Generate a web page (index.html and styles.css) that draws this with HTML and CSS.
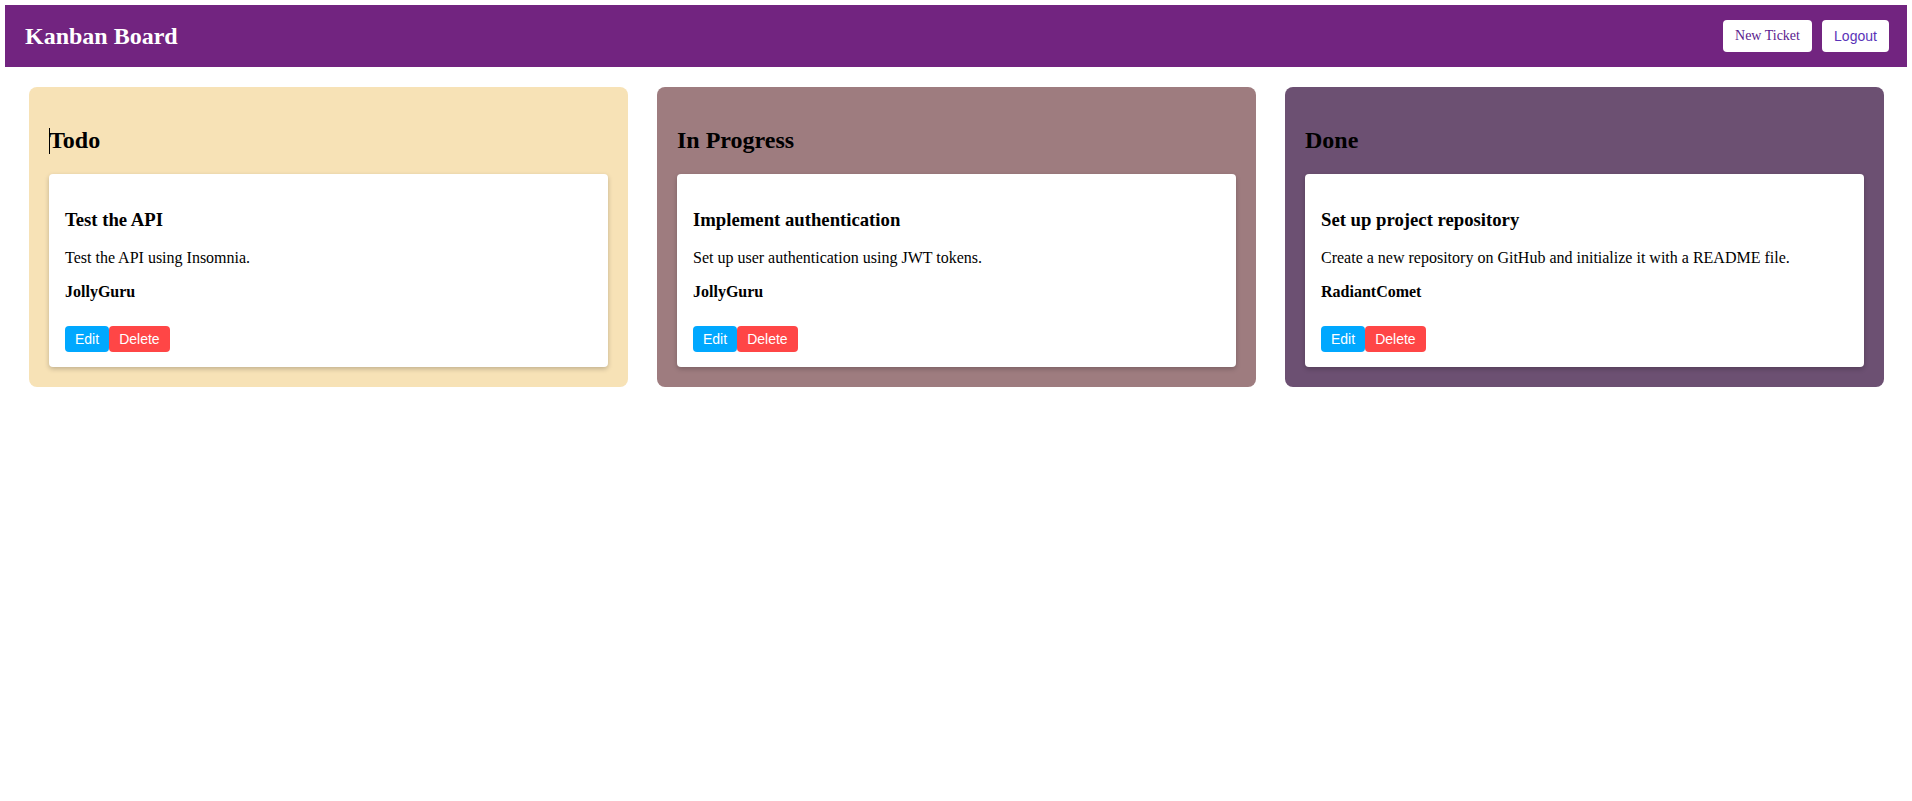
FILE: index.html
```html
<!DOCTYPE html>
<html lang="en">
<head>
<meta charset="utf-8">
<title>Kanban Board</title>
<link rel="stylesheet" href="styles.css">
</head>
<body>
<div class="app">
  <header class="nav">
    <h1 class="brand">Kanban Board</h1>
    <div class="nav-actions">
      <button class="nav-btn nav-link">New Ticket</button>
      <button class="nav-btn nav-logout">Logout</button>
    </div>
  </header>
  <main class="board">
    <section class="column todo">
      <h2 class="column-title"><span class="caret"></span>Todo</h2>
      <div class="ticket">
        <h3 class="ticket-title">Test the API</h3>
        <p class="ticket-desc">Test the API using Insomnia.</p>
        <p class="ticket-user">JollyGuru</p>
        <div class="ticket-actions">
          <button class="btn btn-edit">Edit</button><button class="btn btn-delete">Delete</button>
        </div>
      </div>
    </section>
    <section class="column progress">
      <h2 class="column-title">In Progress</h2>
      <div class="ticket">
        <h3 class="ticket-title">Implement authentication</h3>
        <p class="ticket-desc">Set up user authentication using JWT tokens.</p>
        <p class="ticket-user">JollyGuru</p>
        <div class="ticket-actions">
          <button class="btn btn-edit">Edit</button><button class="btn btn-delete">Delete</button>
        </div>
      </div>
    </section>
    <section class="column done">
      <h2 class="column-title">Done</h2>
      <div class="ticket">
        <h3 class="ticket-title">Set up project repository</h3>
        <p class="ticket-desc">Create a new repository on GitHub and initialize it with a README file.</p>
        <p class="ticket-user">RadiantComet</p>
        <div class="ticket-actions">
          <button class="btn btn-edit">Edit</button><button class="btn btn-delete">Delete</button>
        </div>
      </div>
    </section>
  </main>
</div>
</body>
</html>
```

FILE: styles.css
```css
html, body {
  margin: 0;
  padding: 0;
  background: #ffffff;
}

body {
  font-family: "Liberation Serif", "Times New Roman", serif;
  color: #000000;
}

.app {
  padding: 5px;
}

.nav {
  display: flex;
  align-items: center;
  justify-content: space-between;
  height: 62px;
  padding: 0 18px 0 20px;
  background: #722480;
  box-sizing: border-box;
}

.brand {
  margin: 0;
  font-size: 24px;
  font-weight: bold;
  color: #ffffff;
}

.nav-actions {
  display: flex;
  gap: 10px;
}

.nav-btn {
  height: 32px;
  padding: 0 10px;
  border: none;
  border-radius: 4px;
  background: #ffffff;
  font-size: 14px;
  cursor: pointer;
}

.nav-link {
  width: 89px;
  font-family: "Liberation Serif", "Times New Roman", serif;
  color: #5a1a8e;
}

.nav-logout {
  width: 67px;
  font-family: "Liberation Sans", Arial, sans-serif;
  color: #5a33b8;
}

.board {
  display: flex;
  gap: 29px;
  margin: 20px 23px 0 24px;
  align-items: flex-start;
}

.column {
  flex: 1 1 0;
  padding: 20px;
  border-radius: 8px;
}

.todo { background: #f7e2b6; }
.progress { background: #9e7c7f; }
.done { background: #6c5072; }

.column-title {
  position: relative;
  margin: 20px 0;
  font-size: 24px;
  font-weight: bold;
}

.caret {
  display: inline-block;
  width: 1px;
  height: 26px;
  margin-right: -1px;
  background: #000000;
  vertical-align: -6px;
}

.ticket {
  background: #ffffff;
  border-radius: 4px;
  padding: 16px 16px 15px 16px;
  box-shadow: 0 2px 5px rgba(0, 0, 0, 0.22);
}

.ticket-title {
  margin: 18.72px 0;
  font-size: 18.72px;
  font-weight: bold;
}

.ticket-desc {
  margin: 0 0 16px 0;
  font-size: 16px;
}

.ticket-user {
  margin: 0;
  font-size: 16px;
  font-weight: bold;
}

.ticket-actions {
  display: flex;
  margin-top: 25px;
}

.btn {
  padding: 5px 10px;
  border: none;
  border-radius: 4px;
  font-family: "Liberation Sans", Arial, sans-serif;
  font-size: 14px;
  line-height: 16px;
  color: #ffffff;
  cursor: pointer;
}

.btn-edit { background: #00a8ff; }
.btn-delete { background: #ff4646; }
```
